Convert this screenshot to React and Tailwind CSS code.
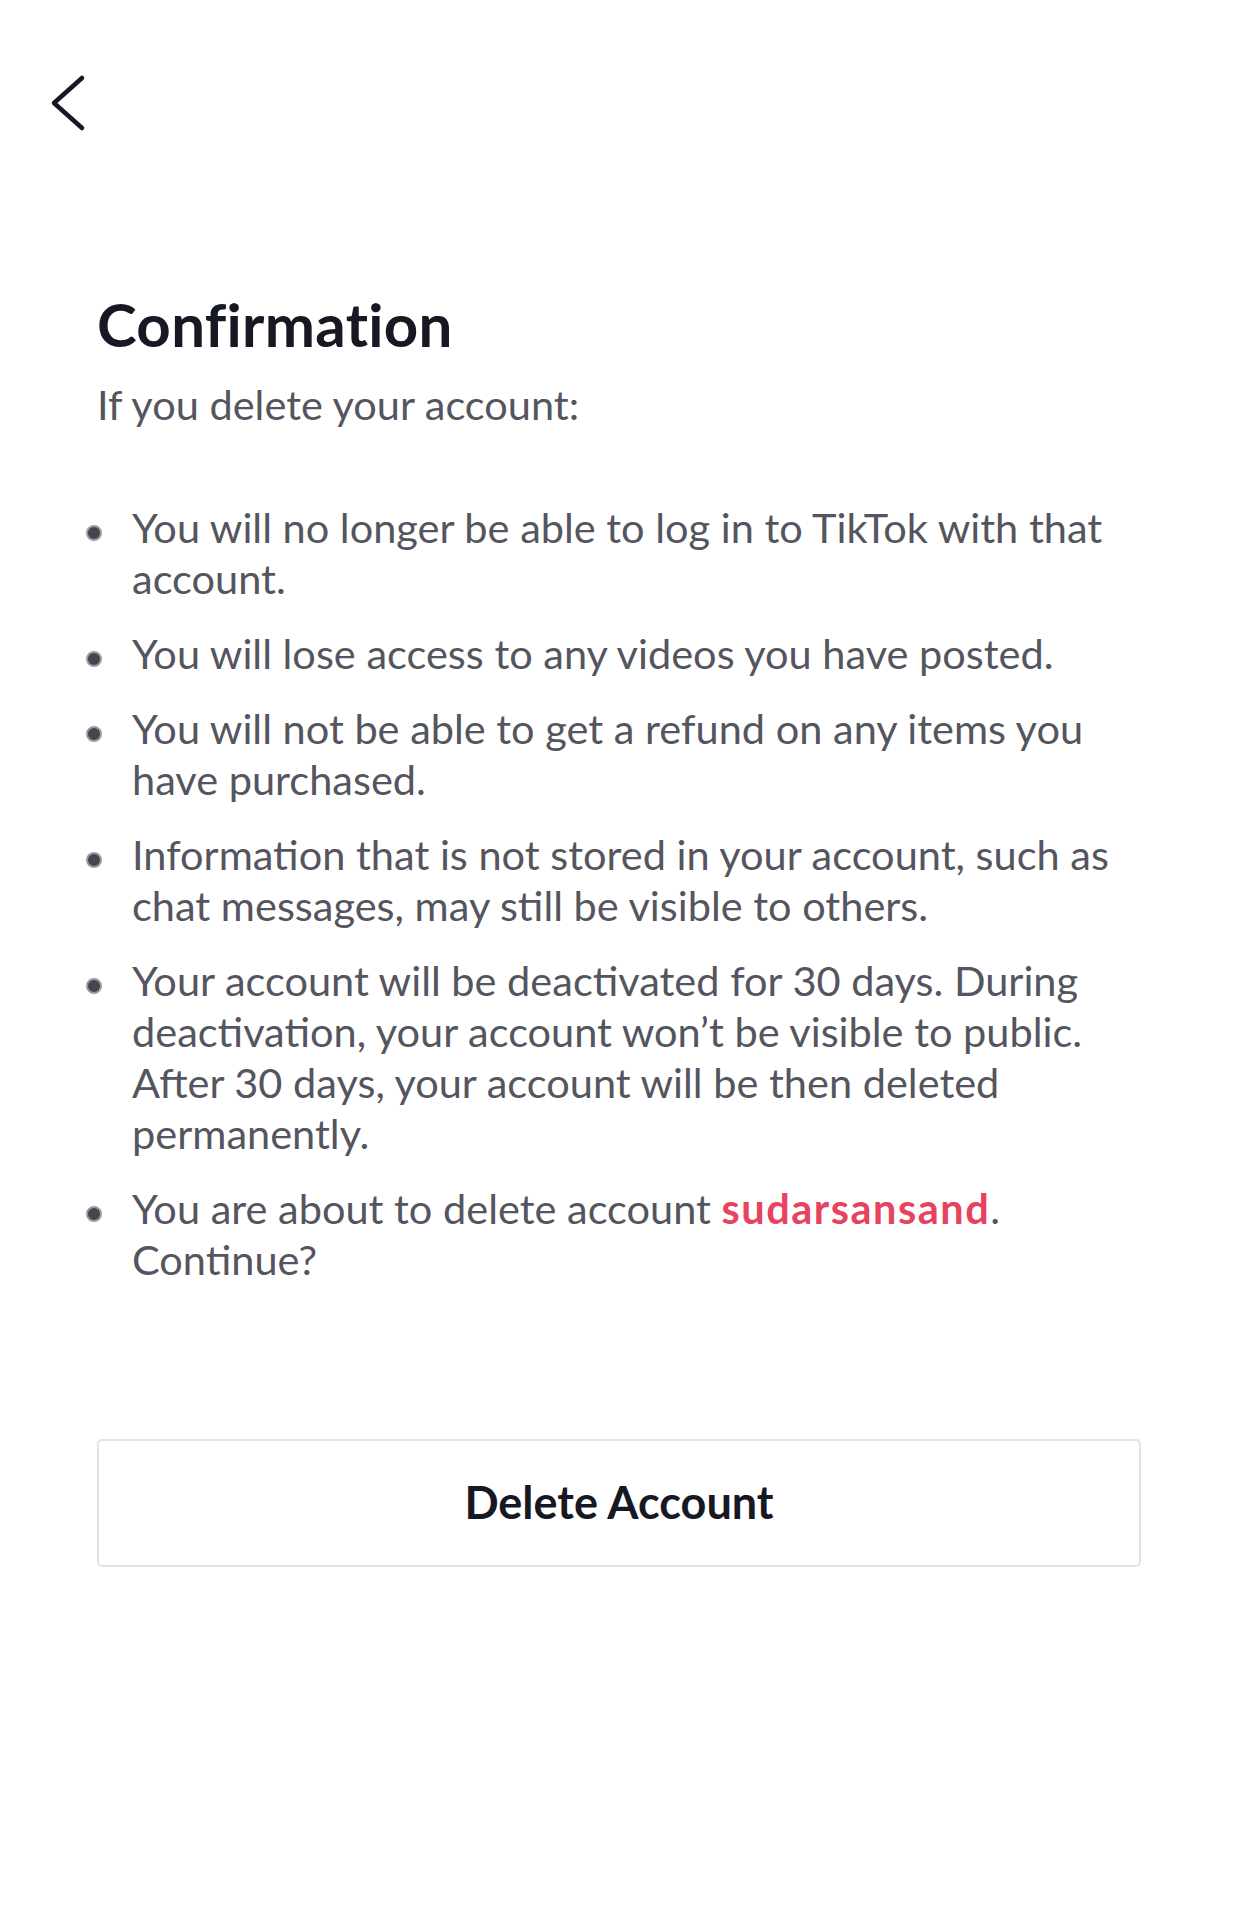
export default function App() {
  const items = [
    [<>You will no longer be able to log in to TikTok with that account.</>],
    [<>You will lose access to any videos you have posted.</>],
    [<>You will not be able to get a refund on any items you have purchased.</>],
    [<>Information that is not stored in your account, such as chat messages, may still be visible to others.</>],
    [<>Your account will be deactivated for 30 days. During deactivation, your account won’t be visible to public. After 30 days, your account will be then deleted permanently.</>],
    [<>You are about to delete account <span className="font-bold tracking-[1.5px] text-[#e8435e]">sudarsansand</span>. Continue?</>],
  ];
  return (
    <div className="w-full min-h-[1909px] bg-white font-['Lato','Liberation_Sans',sans-serif] text-[#161823]">
      <div className="pt-[73px] pl-[48px]">
        <svg width="40" height="60" viewBox="0 0 40 60" fill="none" className="block">
          <path d="M34 5 L6 30 L34 55" stroke="#161823" strokeWidth="4.5" strokeLinecap="round" strokeLinejoin="round" />
        </svg>
      </div>
      <div className="pl-[97px] pr-[102px]">
        <h1 className="mt-[155px] text-[60px] leading-[72px] font-bold tracking-[0.3px]">Confirmation</h1>
        <p className="mt-[19px] text-[41.5px] leading-[51px] text-[#54555e]">If you delete your account:</p>
        <ul className="mt-[72px] -ml-[11px] flex flex-col gap-[24px]">
          {items.map((it, i) => (
            <li key={i} className="flex items-start">
              <span className="mt-[23px] w-[16px] h-[16px] shrink-0 rounded-full bg-[#44454f] border-2 border-[#9a9ba1]" />
              <span className="ml-[30px] text-[41.5px] leading-[51px] text-[#54555e]">{it}</span>
            </li>
          ))}
        </ul>
      </div>
      <div className="pl-[97px] pr-[101px]">
        <button className="mt-[154px] w-full h-[128px] rounded-[5px] border-[2.5px] border-[#e3e3e4] bg-white flex items-center justify-center text-[45px] font-bold text-[#161823]">
          Delete Account
        </button>
      </div>
    </div>
  );
}
